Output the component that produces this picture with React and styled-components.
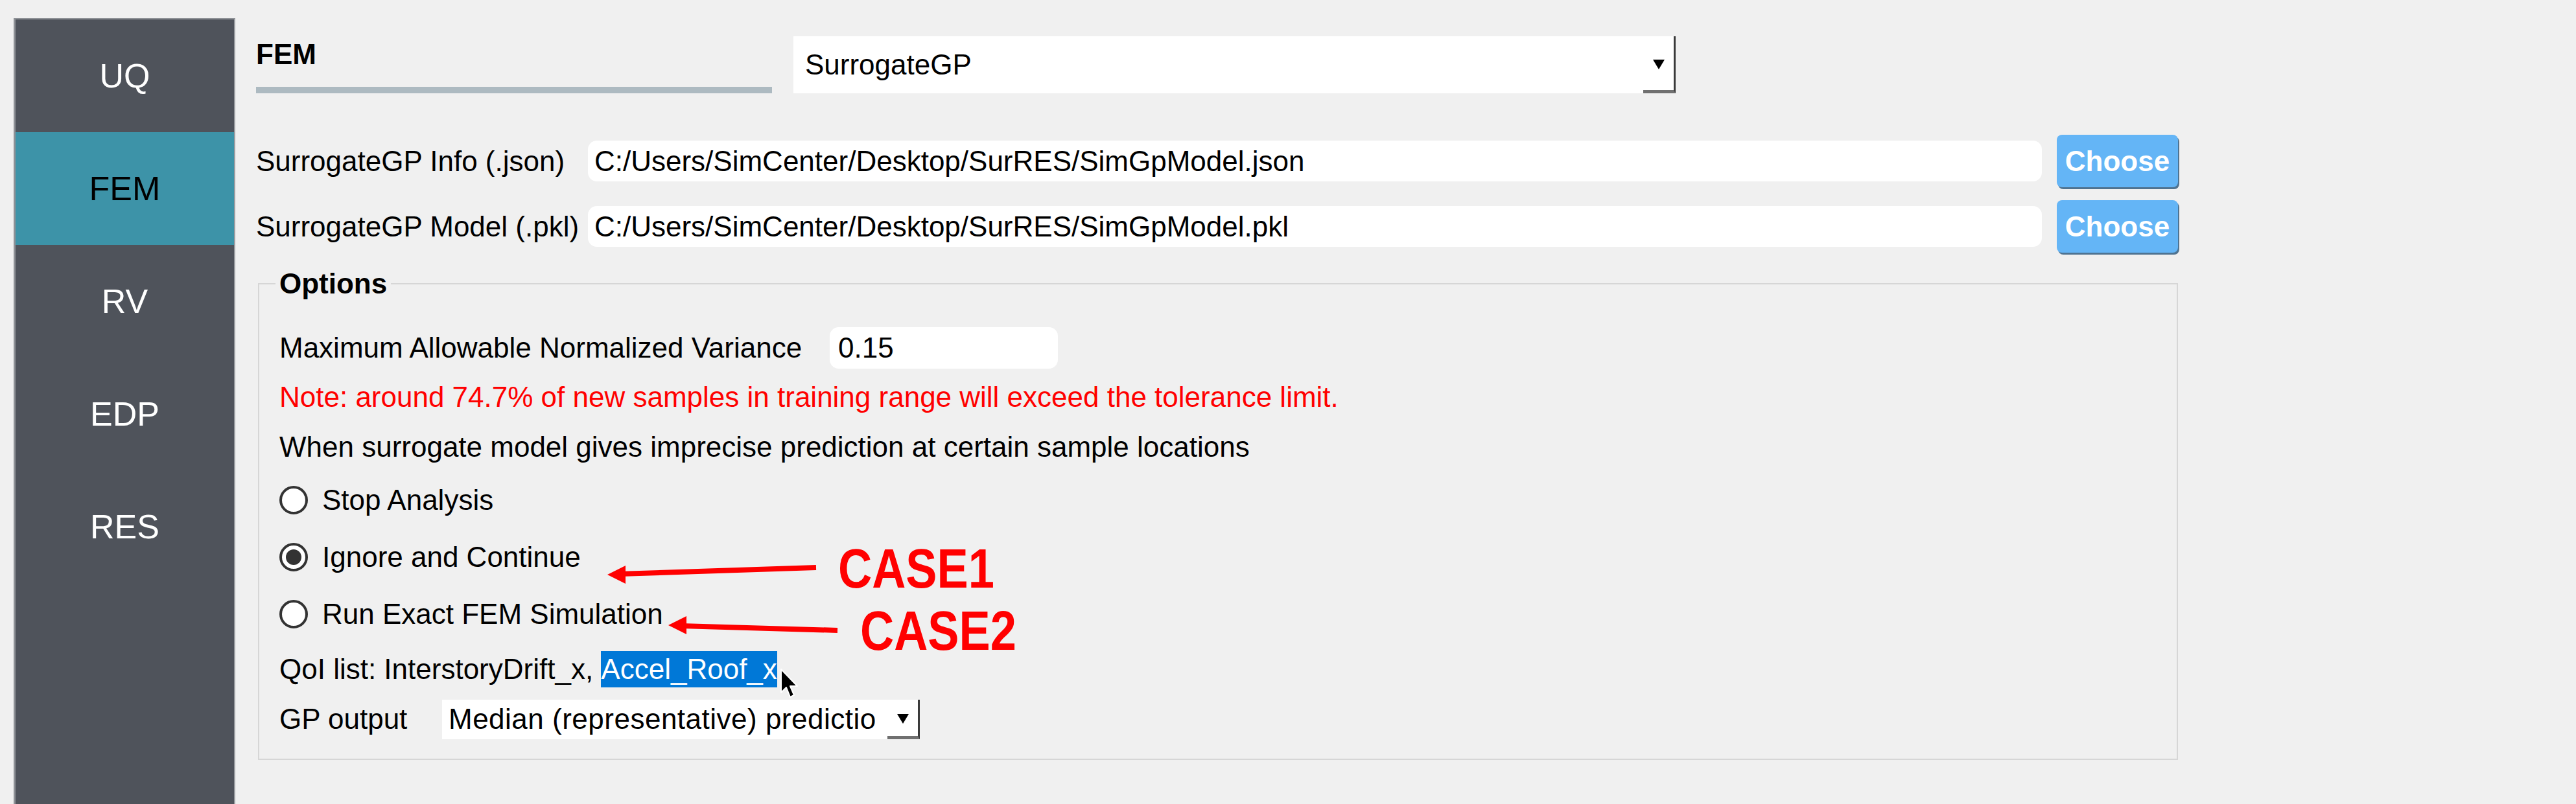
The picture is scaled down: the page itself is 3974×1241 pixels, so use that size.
import React from 'react';
import styled, { createGlobalStyle } from 'styled-components';

const Global = createGlobalStyle`
  html, body { margin: 0; padding: 0; background: #f0f0f0; }
  body {
    font-family: "Liberation Sans", Arial, sans-serif;
    width: 3974px;
    height: 1241px;
    overflow: hidden;
  }
`;

const Page = styled.div`
  position: relative;
  display: flex;
  align-items: flex-start;
  width: 3974px;
  height: 1241px;
  background: #f0f0f0;
  font-family: "Liberation Sans", Arial, sans-serif;
  font-size: 44px;
  color: #000;
`;

const Sidebar = styled.nav`
  margin: 28px 0 0 21px;
  width: 342px;
  height: 1213px;
  box-sizing: border-box;
  background: #4f535b;
  border-left: 3px solid #8e9196;
  border-top: 2px solid #8e9196;
  border-right: 2px solid #9a9da1;
  display: flex;
  flex-direction: column;
`;

const NavItem = styled.div`
  height: 174px;
  display: flex;
  align-items: center;
  justify-content: center;
  font-size: 52px;
  background: ${(p) => (p.$active ? '#3d93a8' : 'transparent')};
  color: ${(p) => (p.$active ? '#000' : '#ffffff')};
`;

const Main = styled.main`
  width: 2965px;
  margin-left: 32px;
  display: flex;
  flex-direction: column;
`;

const HeaderRow = styled.div`
  margin-top: 56px;
  height: 88px;
  display: flex;
  gap: 33px;
`;

const TitleBlock = styled.div`
  width: 796px;
  height: 88px;
  display: flex;
  flex-direction: column;
  justify-content: space-between;
`;

const TitleText = styled.div`
  font-weight: bold;
  line-height: 56px;
`;

const TitleBar = styled.div`
  height: 10px;
  background: #adbac1;
`;

const Select = styled.div`
  width: ${(p) => p.$w}px;
  height: ${(p) => p.$h}px;
  box-sizing: border-box;
  background: #fff;
  display: flex;
  align-items: center;
  padding-left: ${(p) => p.$pad}px;
  overflow: hidden;
`;

const SelectText = styled.span`
  flex: 1;
  white-space: nowrap;
  overflow: hidden;
  margin-right: ${(p) => p.$gap || 0}px;
  letter-spacing: ${(p) => p.$ls || 0}px;
`;

const SelectArrow = styled.span`
  width: ${(p) => p.$w}px;
  flex: none;
  align-self: stretch;
  box-sizing: border-box;
  display: flex;
  align-items: center;
  justify-content: center;
  border-right: 3px solid #3a3a3a;
  border-bottom: 5px solid #707070;
  &::before {
    content: '';
    border-left: 9px solid transparent;
    border-right: 9px solid transparent;
    border-top: 15px solid #000;
    margin-top: 4px;
  }
`;

const FileRow = styled.div`
  margin-top: ${(p) => p.$mt}px;
  height: 81px;
  display: grid;
  grid-template-columns: 489px 2243px 187px;
  column-gap: 23px;
  align-items: center;
`;

const Label = styled.span`
  white-space: nowrap;
  width: ${(p) => (p.$w ? `${p.$w}px` : 'auto')};
  flex: none;
`;

const PathInput = styled.div`
  height: 63px;
  box-sizing: border-box;
  background: #fff;
  border-radius: 14px;
  padding-left: 10px;
  display: flex;
  align-items: center;
  white-space: nowrap;
  overflow: hidden;
`;

const ChooseButton = styled.button`
  height: 81px;
  border: none;
  border-radius: 8px;
  background: #64b5f6;
  color: #fff;
  font-family: "Liberation Sans", Arial, sans-serif;
  font-weight: bold;
  font-size: 44px;
  padding: 0;
  box-shadow: 2px 3px 0 #4f7391;
`;

const GroupBox = styled.fieldset`
  margin: 20px 0 0 3px;
  width: 2962px;
  box-sizing: border-box;
  border: 2px solid #d6d6d6;
  padding: 33px 0 24px 31px;
  min-width: 0;
  display: flex;
  flex-direction: column;
`;

const Legend = styled.legend`
  font-weight: bold;
  line-height: 56px;
  padding: 0 6px;
  margin-left: -6px;
  background: #f0f0f0;
`;

const OptionRow = styled.div`
  height: ${(p) => p.$h}px;
  display: flex;
  align-items: center;
  white-space: nowrap;
  color: ${(p) => (p.$warn ? '#ff0000' : '#000')};
`;

const ValueInput = styled.div`
  width: 352px;
  height: 64px;
  box-sizing: border-box;
  background: #fff;
  border-radius: 14px;
  padding-left: 13px;
  display: flex;
  align-items: center;
`;

const Radio = styled.span`
  width: 44px;
  height: 44px;
  box-sizing: border-box;
  border-radius: 50%;
  border: 4px solid #333;
  background: #fff;
  margin-right: 22px;
  display: flex;
  align-items: center;
  justify-content: center;
  &::after {
    content: '';
    display: ${(p) => (p.$checked ? 'block' : 'none')};
    width: 24px;
    height: 24px;
    border-radius: 50%;
    background: #333;
  }
`;

const Selection = styled.span`
  display: inline-block;
  line-height: 56px;
  background: #0078d7;
  color: #fff;
`;

const Cursor = styled.svg`
  position: absolute;
  left: 1203px;
  top: 1031px;
  width: 30px;
  height: 48px;
`;

const Overlay = styled.svg`
  position: absolute;
  left: 0;
  top: 0;
  width: 3974px;
  height: 1241px;
  pointer-events: none;
`;

const CaseLabel = styled.div`
  position: absolute;
  left: ${(p) => p.$x}px;
  top: ${(p) => p.$y}px;
  font-family: "Liberation Sans", Arial, sans-serif;
  font-weight: bold;
  font-size: 86px;
  line-height: 86px;
  color: #ff0000;
  transform: scaleX(0.84);
  transform-origin: left top;
  white-space: nowrap;
`;

const navItems = ['UQ', 'FEM', 'RV', 'EDP', 'RES'];

export default function App() {
  return (
    <Page>
      <Global />
      <Sidebar>
        {navItems.map((n) => (
          <NavItem key={n} $active={n === 'FEM'}>
            {n}
          </NavItem>
        ))}
      </Sidebar>

      <Main>
        <HeaderRow>
          <TitleBlock>
            <TitleText>FEM</TitleText>
            <TitleBar />
          </TitleBlock>
          <Select $w={1361} $h={88} $pad={18}>
            <SelectText>SurrogateGP</SelectText>
            <SelectArrow $w={50} />
          </Select>
        </HeaderRow>

        <FileRow $mt={64}>
          <Label>SurrogateGP Info (.json)</Label>
          <PathInput>C:/Users/SimCenter/Desktop/SurRES/SimGpModel.json</PathInput>
          <ChooseButton>Choose</ChooseButton>
        </FileRow>
        <FileRow $mt={20}>
          <Label>SurrogateGP Model (.pkl)</Label>
          <PathInput>C:/Users/SimCenter/Desktop/SurRES/SimGpModel.pkl</PathInput>
          <ChooseButton>Choose</ChooseButton>
        </FileRow>

        <GroupBox>
          <Legend>Options</Legend>
          <OptionRow $h={76}>
            <Label $w={849}>Maximum Allowable Normalized Variance</Label>
            <ValueInput>0.15</ValueInput>
          </OptionRow>
          <OptionRow $h={75} $warn>
            Note: around 74.7% of new samples in training range will exceed the tolerance limit.
          </OptionRow>
          <OptionRow $h={79}>
            When surrogate model gives imprecise prediction at certain sample locations
          </OptionRow>
          <OptionRow $h={86}>
            <Radio />
            Stop Analysis
          </OptionRow>
          <OptionRow $h={89}>
            <Radio $checked />
            Ignore and Continue
          </OptionRow>
          <OptionRow $h={88}>
            <Radio />
            Run Exact FEM Simulation
          </OptionRow>
          <OptionRow $h={81}>
            QoI list: InterstoryDrift_x,&nbsp;<Selection>Accel_Roof_x</Selection>
          </OptionRow>
          <OptionRow $h={74}>
            <Label $w={251}>GP output</Label>
            <Select $w={737} $h={61} $pad={10}>
              <SelectText $gap={16} $ls={0.5}>Median (representative) prediction</SelectText>
              <SelectArrow $w={50} />
            </Select>
          </OptionRow>
        </GroupBox>
      </Main>

      <Overlay viewBox="0 0 3974 1241">
        <line x1="1259" y1="876" x2="955" y2="886" stroke="#ff0000" strokeWidth="8" />
        <polygon points="937,887 965,873 965,901" fill="#ff0000" />
        <line x1="1292" y1="973" x2="1050" y2="966" stroke="#ff0000" strokeWidth="8" />
        <polygon points="1031,965 1059,951 1059,979" fill="#ff0000" />
      </Overlay>
      <CaseLabel $x={1293} $y={834}>CASE1</CaseLabel>
      <CaseLabel $x={1327} $y={930}>CASE2</CaseLabel>

      <Cursor viewBox="0 0 30 48">
        <path
          d="M2 2 L2 38 L10 30 L16 45 L22 42 L16 28 L27 28 Z"
          fill="#000"
          stroke="#fff"
          strokeWidth="2"
          strokeLinejoin="round"
        />
      </Cursor>
    </Page>
  );
}
